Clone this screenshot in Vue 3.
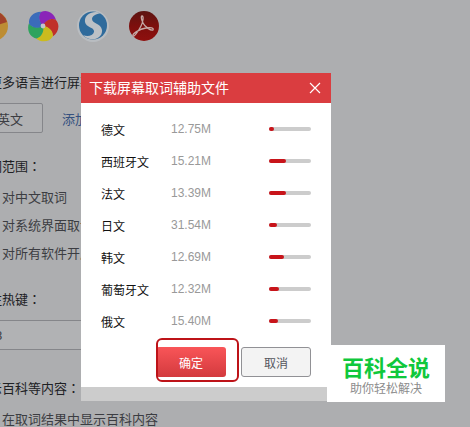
<template>
  <div class="page">
    <main class="settings">
      <div class="apps">
        <svg class="app-icon" viewBox="0 0 32 32">
          <circle cx="16" cy="16" r="15" fill="#bd8d33" />
          <path d="M16 1A15 15 0 0 1 30 12L18 16Z" fill="#a1422a" />
          <circle cx="16" cy="16" r="6" fill="#3d6390" />
        </svg>
        <svg class="app-icon" viewBox="0 0 32 32">
          <path
            v-for="petal in petals"
            :key="petal.color"
            d="M16 16C11 12 11 5 14 2C20 -1 27 3 29 10C24 8 19 11 16 16Z"
            :fill="petal.color"
            :transform="`rotate(${petal.angle} 16 16)`"
          />
          <circle cx="16" cy="16" r="2.4" fill="#c3c5ca" />
        </svg>
        <svg class="app-icon" viewBox="0 0 32 32">
          <circle cx="16" cy="16" r="16" fill="#b9bdc1" />
          <circle cx="16" cy="15.5" r="14" fill="#2f6b9c" />
          <path
            d="M24 3C15 0 7 5 8 12C9 18 18 17 17 22C16 26 10 27 6 25C13 33 26 29 25 20C24 13 15 14 15 9C15 6 19 4 24 3Z"
            fill="#bcc1c6"
          />
        </svg>
        <svg class="app-icon" viewBox="0 0 32 32">
          <defs>
            <linearGradient id="pdf" x1="0" y1="0" x2="0" y2="1">
              <stop offset="0" stop-color="#5c1512" />
              <stop offset="0.5" stop-color="#7d0f0d" />
              <stop offset="1" stop-color="#8f100e" />
            </linearGradient>
          </defs>
          <circle cx="17" cy="16" r="15" fill="url(#pdf)" />
          <path
            d="M15 6C17 6 16 12 14 16C11 22 7 27 6 26C5 24 12 19 19 18C24 17 27 18 26 20C24 21 18 17 16 13C14 9 14 6 15 6Z"
            fill="none"
            stroke="#c4a9a5"
            stroke-width="1.3"
          />
        </svg>
      </div>

      <p class="label">更多语言进行屏幕</p>
      <div class="languages">
        <button type="button" class="language">英文</button>
        <a href="#add" class="add">添加</a>
      </div>

      <h3 class="label">词范围<span class="colon">：</span></h3>
      <ul class="options">
        <li v-for="scope in scopes" :key="scope">{{ scope }}</li>
      </ul>

      <label class="label" for="hotkey">注热键<span class="colon">：</span></label>
      <input id="hotkey" v-model="hotkey" class="hotkey" type="text" />

      <h3 class="label">示百科等内容<span class="colon">：</span></h3>
      <ul class="options">
        <li>在取词结果中显示百科内容</li>
      </ul>
    </main>

    <div class="overlay">
      <section class="dialog" role="dialog" aria-labelledby="dialog-title">
        <header class="dialog-header">
          <h2 id="dialog-title">下载屏幕取词辅助文件</h2>
          <button type="button" class="close" aria-label="关闭">
            <svg viewBox="0 0 12 12">
              <path d="M1 1L11 11M11 1L1 11" stroke="currentColor" stroke-width="1.2" />
            </svg>
          </button>
        </header>
        <div class="dialog-body">
          <table class="files">
            <tbody>
              <tr v-for="file in files" :key="file.name">
                <td class="name">{{ file.name }}</td>
                <td class="size">{{ file.size }}</td>
                <td>
                  <div class="bar" role="progressbar" :aria-label="file.name" :aria-valuenow="file.progress">
                    <div class="bar-fill" :style="{ width: file.progress + '%' }"></div>
                  </div>
                </td>
              </tr>
            </tbody>
          </table>
          <div class="actions">
            <div class="highlight">
              <button type="button" class="btn primary">确定</button>
            </div>
            <button type="button" class="btn">取消</button>
          </div>
        </div>
        <div class="dialog-footer"></div>
      </section>
    </div>

    <aside class="badge">
      <strong>百科全说</strong>
      <span>助你轻松解决</span>
    </aside>
  </div>
</template>

<script setup>
import { ref } from 'vue'

const hotkey = ref('F8')

const scopes = ['对中文取词', '对系统界面取词', '对所有软件开启']

const petals = [
  { color: '#8a25b8', angle: 0 },
  { color: '#c0312a', angle: 72 },
  { color: '#cbbb1e', angle: 144 },
  { color: '#2fa35d', angle: 216 },
  { color: '#3b6cba', angle: 288 }
]

const files = ref([
  { name: '德文', size: '12.75M', progress: 12 },
  { name: '西班牙文', size: '15.21M', progress: 40 },
  { name: '法文', size: '13.39M', progress: 40 },
  { name: '日文', size: '31.54M', progress: 19 },
  { name: '韩文', size: '12.69M', progress: 36 },
  { name: '葡萄牙文', size: '12.32M', progress: 24 },
  { name: '俄文', size: '15.40M', progress: 21 }
])
</script>

<style>
body {
  background: #adaeb0;
}
</style>

<style scoped>
.page {
  position: relative;
  height: 100vh;
  overflow: hidden;
  background: #adaeb0;
  color: #202124;
  font-family: "Liberation Sans", "Noto Sans CJK SC", sans-serif;
  font-size: 13px;
}

.settings {
  margin-left: -23px;
  padding-top: 10px;
}

.apps {
  display: flex;
  gap: 18px;
  margin-bottom: 31px;
}

.app-icon {
  width: 32px;
  height: 32px;
}

.label {
  display: block;
  margin: 0;
  padding-left: 12px;
  font-size: 13px;
  font-weight: 400;
  line-height: 20px;
}

.colon {
  font-family: "Noto Sans CJK TC", sans-serif;
  line-height: 1;
}

.languages {
  display: flex;
  align-items: center;
  gap: 19px;
  margin: 10px 0 24px;
}

.language {
  height: 30px;
  padding: 0 19px;
  border: 1px solid #85868a;
  border-radius: 2px;
  background: #b0b1b3;
  color: #3c3d42;
  font: inherit;
}

.add {
  color: #34507f;
  text-decoration: none;
}

.options {
  margin: 7px 0 22px;
  padding: 0 0 0 25px;
  color: #3c3d42;
  line-height: 28px;
  list-style: none;
}

.hotkey {
  display: block;
  box-sizing: border-box;
  width: 180px;
  height: 30px;
  margin: 10px 0 29px;
  padding: 0 9px;
  border: 1px solid #85868a;
  background: #b1b2b4;
  color: #3c3d42;
  font: inherit;
}

.overlay {
  position: absolute;
  inset: 0;
  padding: 73px 0 0 81px;
}

.dialog {
  width: 250px;
  background: #fff;
}

.dialog-header {
  display: flex;
  align-items: center;
  justify-content: space-between;
  height: 30px;
  padding: 0 10px 0 8px;
  background: #da3d40;
  color: #fff;
}

.dialog-header h2 {
  margin: 0;
  font-size: 14px;
  font-weight: 400;
  line-height: 20px;
}

.close {
  display: flex;
  padding: 0;
  border: 0;
  background: none;
  color: #fff;
}

.close svg {
  width: 12px;
  height: 12px;
}

.dialog-body {
  padding: 10px 20px;
}

.files {
  width: 100%;
  border-collapse: collapse;
  table-layout: fixed;
  font-size: 12px;
}

.files td {
  height: 32px;
  padding: 0;
}

.files .name {
  width: 70px;
  color: #111;
}

.files .size {
  width: 98px;
  color: #999;
}

.bar {
  height: 4px;
  border-radius: 2px;
  background: #ccc;
}

.bar-fill {
  height: 100%;
  border-radius: 2px;
  background: #c8141a;
}

.actions {
  display: flex;
  justify-content: flex-end;
  gap: 15px;
  margin-top: 10px;
}

.btn {
  display: block;
  width: 70px;
  height: 30px;
  padding: 0;
  border: 1px solid #919195;
  border-radius: 3px;
  background: #f3f3f3;
  color: #55565e;
  font: inherit;
  font-size: 12px;
}

.btn.primary {
  border: 0;
  background: linear-gradient(#f95558, #d33a3e);
  color: #fff;
}

.highlight {
  position: relative;
}

.highlight::after {
  content: '';
  position: absolute;
  inset: -9px -13px -5px 0;
  border: 2px solid #bd1318;
  border-radius: 6px;
  pointer-events: none;
}

.dialog-footer {
  height: 14px;
  background: #ccc;
}

.badge {
  position: absolute;
  top: 345px;
  left: 327px;
  display: flex;
  flex-direction: column;
  align-items: center;
  padding: 11px 15px 5px;
  background: #fff;
}

.badge strong {
  color: #0fc83c;
  font-size: 22px;
  font-weight: 700;
  line-height: 26px;
}

.badge span {
  color: #8c8c8c;
  font-size: 12px;
  line-height: 15px;
}
</style>
